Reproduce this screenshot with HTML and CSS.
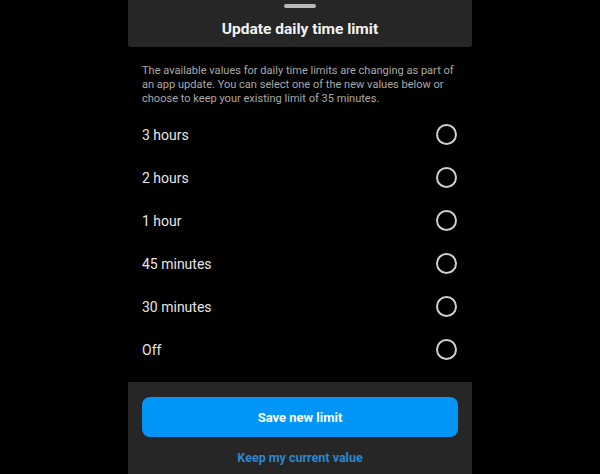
FILE: index.html
```html
<!DOCTYPE html>
<html>
<head>
<meta charset="utf-8">
<link rel="stylesheet" href="styles.css">
</head>
<body>
<div class="sheet">
  <header class="head">
    <div class="handle"></div>
    <h1 class="title">Update daily time limit</h1>
  </header>
  <main class="content">
    <p class="desc">The available values for daily time limits are changing as part of an app update. You can select one of the new values below or choose to keep your existing limit of 35 minutes.</p>
    <ul class="options">
      <li class="opt"><span>3 hours</span><span class="radio"></span></li>
      <li class="opt"><span>2 hours</span><span class="radio"></span></li>
      <li class="opt"><span>1 hour</span><span class="radio"></span></li>
      <li class="opt"><span>45 minutes</span><span class="radio"></span></li>
      <li class="opt"><span>30 minutes</span><span class="radio"></span></li>
      <li class="opt"><span>Off</span><span class="radio"></span></li>
    </ul>
  </main>
  <footer class="foot">
    <button class="save">Save new limit</button>
    <div class="keep">Keep my current value</div>
  </footer>
</div>
</body>
</html>
```
FILE: styles.css
```css
html, body {
  margin: 0;
  padding: 0;
  background: #000;
  height: 474px;
  overflow: hidden;
  font-family: Roboto, "Liberation Sans", sans-serif;
}
.sheet {
  width: 344px;
  margin: 0 auto;
  height: 474px;
  display: flex;
  flex-direction: column;
}
.head {
  background: #262626;
  height: 47px;
  border-radius: 0 0 3px 3px;
  display: flex;
  flex-direction: column;
  align-items: center;
}
.handle {
  width: 32px;
  height: 4px;
  border-radius: 2px;
  background: #b8b8b8;
  margin-top: 4px;
}
.title {
  margin: 11px 0 0;
  font-size: 15.5px;
  font-weight: 700;
  color: #f2f2f2;
  line-height: 20px;
}
.content {
  flex: 1;
  padding: 17px 14px 0;
}
.desc {
  margin: 0;
  font-size: 11.05px;
  line-height: 14px;
  color: #a9a9a9;
}
.options {
  list-style: none;
  margin: 7px 0 0;
  padding: 0;
}
.opt {
  height: 43px;
  display: flex;
  align-items: center;
  justify-content: space-between;
  font-size: 14px;
  color: #e6e6e6;
  padding-right: 1px;
}
.radio {
  width: 17px;
  height: 17px;
  border: 2px solid #cfcfcf;
  border-radius: 50%;
}
.foot {
  background: #262626;
  height: 92px;
  padding: 15px 14px 0;
  box-sizing: border-box;
  display: flex;
  flex-direction: column;
  align-items: stretch;
}
.save {
  height: 40px;
  border: none;
  border-radius: 8px;
  background: #0095f6;
  color: #fff;
  font-family: inherit;
  font-size: 13px;
  font-weight: 700;
}
.keep {
  margin-top: 13px;
  text-align: center;
  font-size: 12.5px;
  font-weight: 700;
  color: #2e86cc;
}
```
